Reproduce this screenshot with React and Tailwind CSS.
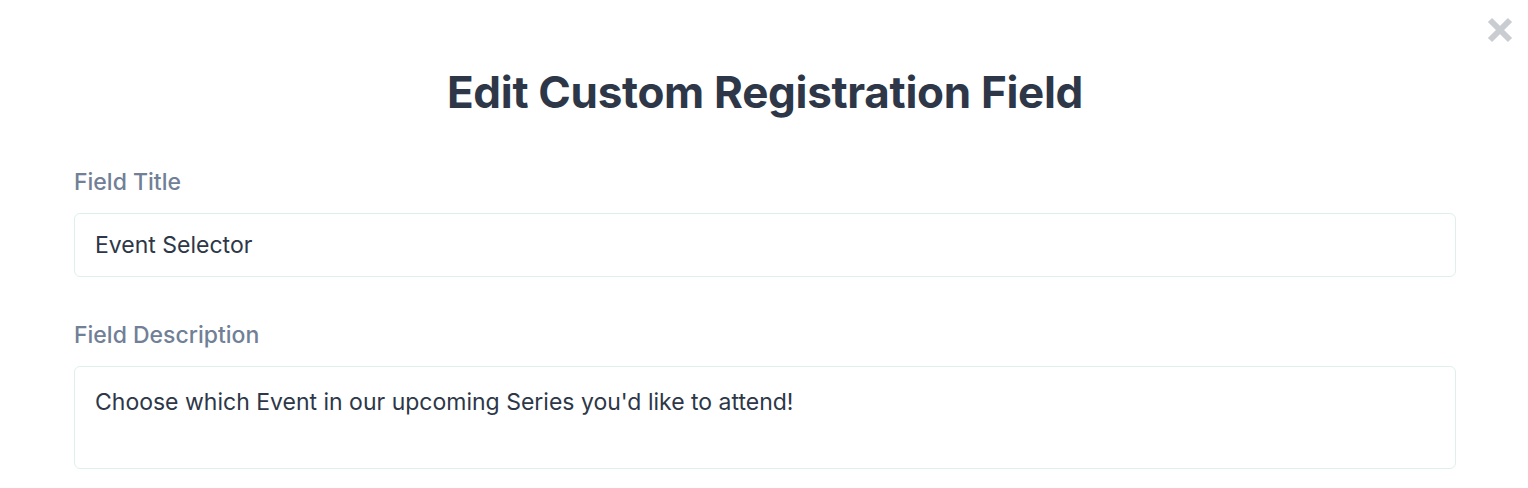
import React from "react";

export default function App() {
  return (
    <div className="relative w-full min-h-[488px] bg-white font-['Inter',sans-serif]">
      <button className="absolute right-[14px] top-[16px] text-[#c9ccd1]" aria-label="Close">
        <svg width="28" height="28" viewBox="0 0 28 28">
          <path d="M4 4 L24 24 M24 4 L4 24" stroke="currentColor" strokeWidth="6" strokeLinecap="butt" />
        </svg>
      </button>

      <div className="pl-[74px] pr-[72px] pt-[64px]">
        <h1 className="text-center text-[44px] leading-[56px] font-bold text-[#2d3748] tracking-[-0.3px]">
          Edit Custom Registration Field
        </h1>

        <div className="mt-[48px]">
          <label className="block text-[23px] leading-[28px] font-medium text-[#718096]">Field Title</label>
          <div className="mt-[17px] h-[64px] flex items-center px-[20px] border border-[#dff0ea] rounded-[6px] text-[23px] text-[#2d3748]">
            Event Selector
          </div>
        </div>

        <div className="mt-[44px]">
          <label className="block text-[23px] leading-[28px] font-medium text-[#718096]">Field Description</label>
          <div className="mt-[17px] h-[103px] px-[20px] pt-[20px] border border-[#dff0ea] rounded-[6px] text-[23px] leading-[30px] text-[#2d3748]">
            Choose which Event in our upcoming Series you'd like to attend!
          </div>
        </div>
      </div>
    </div>
  );
}
